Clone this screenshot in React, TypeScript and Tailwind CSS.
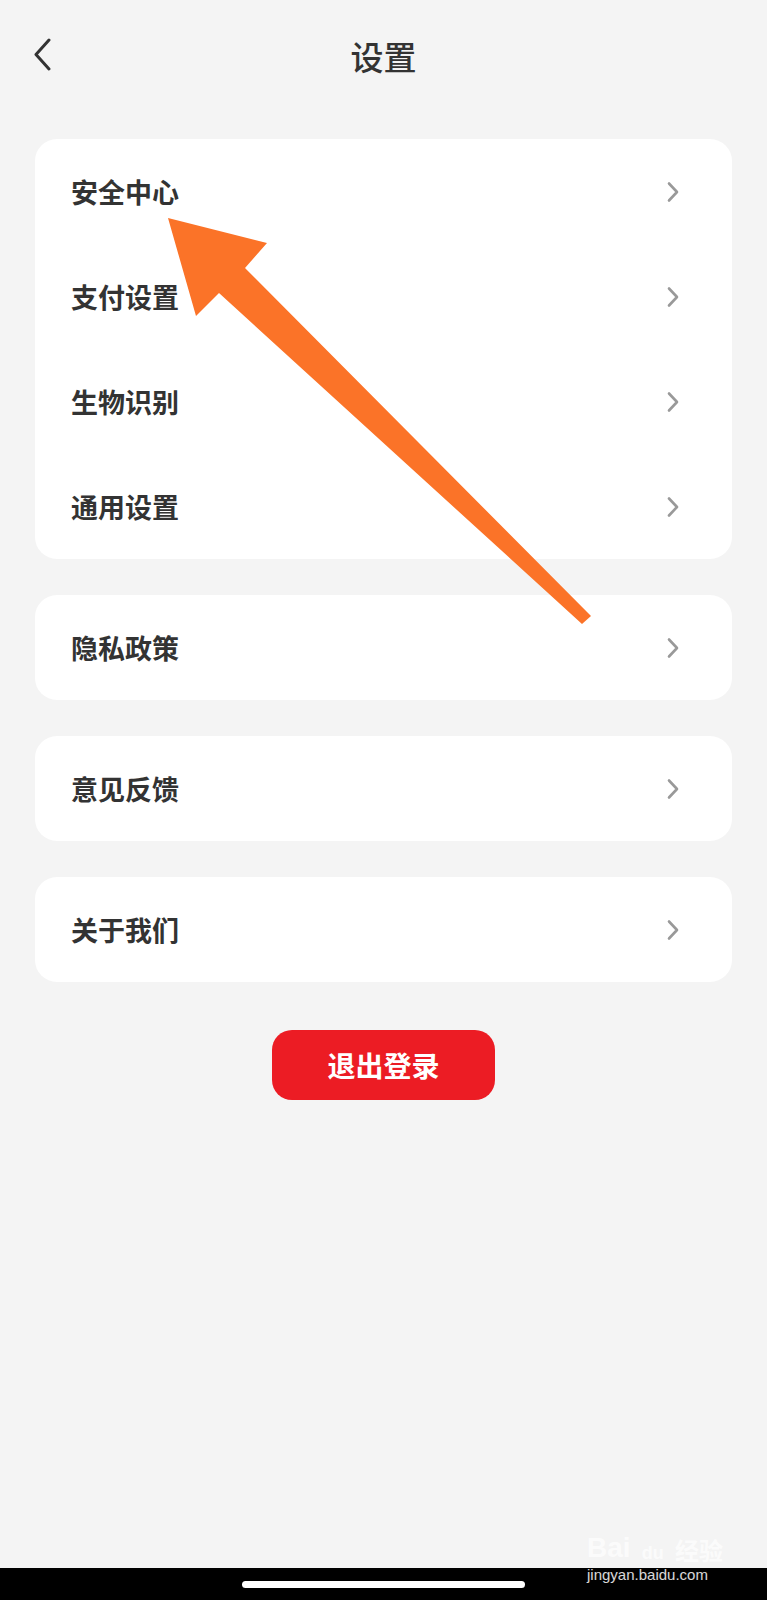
const groups: string[][] = [
    ['安全中心', '支付设置', '生物识别', '通用设置'],
    ['隐私政策'],
    ['意见反馈'],
    ['关于我们'],
]

const font = { fontFamily: '"Noto Sans CJK SC", "Noto Sans", sans-serif' }
const latin = { fontFamily: '"Liberation Sans", Arial, sans-serif' }

function Chevron() {
    return (
        <svg width="14" height="22" viewBox="0 0 14 22" fill="none">
            <path d="M3 2.5 L11 11 L3 19.5" stroke="#999999" strokeWidth="2.6" strokeLinecap="round" strokeLinejoin="round" />
        </svg>
    )
}

function Row({ label }: { label: string }) {
    return (
        <div className="flex h-[105px] items-center justify-between pl-[36px] pr-[52px]">
            <span className="text-[27px] font-bold leading-none text-[#333333]">{label}</span>
            <Chevron />
        </div>
    )
}

export default function App() {
    return (
        <div className="relative flex h-[1600px] w-[767px] flex-col bg-[#f4f4f4]" style={font}>
            {/* Header */}
            <div className="relative flex h-[112px] items-center justify-center">
                <svg className="absolute left-[32px] top-[38px]" width="22" height="33" viewBox="0 0 22 33" fill="none">
                    <path d="M17 2 L4 16.5 L17 31" stroke="#333333" strokeWidth="3" strokeLinecap="round" strokeLinejoin="round" />
                </svg>
                <span className="text-[33px] font-medium leading-none text-[#333333]">设置</span>
            </div>

            {/* Cards */}
            <div className="mt-[27px] flex flex-col gap-[36px] px-[35px]">
                {groups.map((rows, i) => (
                    <div key={i} className="overflow-hidden rounded-[22px] bg-white">
                        {rows.map((label) => (
                            <Row key={label} label={label} />
                        ))}
                    </div>
                ))}
            </div>

            {/* Logout */}
            <div className="mt-[48px] flex justify-center">
                <button className="flex h-[70px] w-[223px] items-center justify-center rounded-[20px] bg-[#ec1c24] text-[28px] font-bold text-white">
                    退出登录
                </button>
            </div>

            <div className="flex-1" />

            {/* Home indicator bar */}
            <div className="flex h-[32px] items-start justify-center bg-black pt-[13px]">
                <div className="h-[7px] w-[283px] rounded-full bg-white" />
            </div>

            {/* Annotation arrow */}
            <svg className="pointer-events-none absolute left-0 top-0" width="767" height="1600" viewBox="0 0 767 1600">
                <polygon
                    points="168,218 267,243 245,268 591,616 582,624 219,293 196,316"
                    fill="#fb7328"
                />
            </svg>

            {/* Watermark */}
            <div className="pointer-events-none absolute left-[587px] top-[1530px] flex w-[136px] flex-col">
                <div className="flex h-[32px] items-end justify-between text-white/70">
                    <span className="text-[28px] font-bold leading-none" style={latin}>Bai</span>
                    <span className="text-[18px] font-bold leading-none" style={latin}>du</span>
                    <span className="text-[24px] font-bold leading-none">经验</span>
                </div>
                <span className="mt-[5px] text-[15px] leading-none text-white/85" style={latin}>
                    jingyan.baidu.com
                </span>
            </div>
        </div>
    )
}
